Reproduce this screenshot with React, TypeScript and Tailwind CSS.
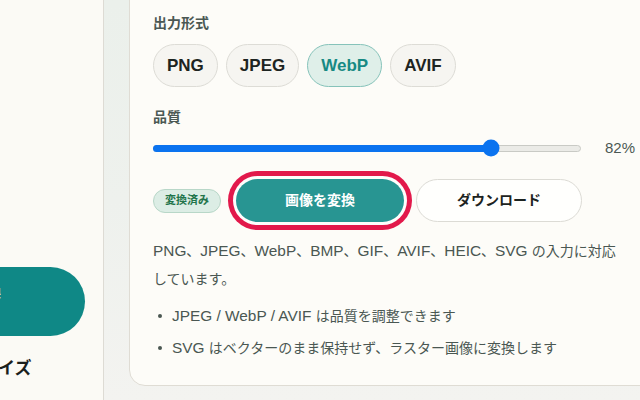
const formats = ["PNG", "JPEG", "WebP", "AVIF"];

// latin runs render a touch wider than the japanese ones in the original
function Mixed({ text }: { text: string }) {
  const parts = text.split(/([\x20-\x7E]+)/).filter((p) => p !== "");
  return (
    <>
      {parts.map((p, i) =>
        /^[\x20-\x7E]+$/.test(p) ? (
          <span key={i} className="text-[15.4px]">
            {p}
          </span>
        ) : (
          <span key={i}>{p}</span>
        )
      )}
    </>
  );
}

export default function App() {
  const active = "WebP";
  const quality = 82;

  return (
    <div
      className="w-[640px] h-[400px] overflow-hidden flex bg-[#f3f3f0]"
      style={{ fontFamily: '"Liberation Sans", "Noto Sans CJK JP", sans-serif' }}
    >
      {/* Sidebar */}
      <aside className="w-[104px] shrink-0 h-full bg-[#fbfaf5] border-r border-[#dddbd4] flex flex-col">
        <div className="mt-[267px] ml-[-116px] w-[201px] h-[69px] rounded-full bg-[#0f8886] flex items-center justify-end pr-[84px] pb-[18px] text-white text-[15px] font-bold">
          画像変換
        </div>
        <div className="mt-[21px] ml-[-36px] text-[17px] font-bold text-[#1b1f1d] leading-[24px]">
          リサイズ
        </div>
      </aside>

      {/* Main */}
      <main className="flex-1 h-full bg-gradient-to-b from-[#ebf0eb] via-[#eef1ed] to-[#f3f3f0] pl-[25px]">
        <section className="w-[531px] mt-[-20px] bg-[#fdfcf8] border border-[#dfdcd4] rounded-2xl pl-[23px] pr-[24px] pt-[32px] pb-[25px]">
          <div className="text-[14px] leading-[20px] font-bold text-[#4b5853]">出力形式</div>
          <div className="mt-[11px] flex gap-2">
            {formats.map((f) =>
              f === active ? (
                <button
                  key={f}
                  className="h-[43px] px-[13px] rounded-full border border-[#86c3ba] bg-[#dfefe9] text-[#178a84] text-[17px] font-bold"
                >
                  {f}
                </button>
              ) : (
                <button
                  key={f}
                  className="h-[43px] px-[13px] rounded-full border border-[#dddcd6] bg-[#f6f5f1] text-[#1d2421] text-[17px] font-bold"
                >
                  {f}
                </button>
              )
            )}
          </div>

          <div className="mt-[20px] text-[14px] leading-[20px] font-bold text-[#4b5853]">品質</div>
          <div className="mt-[11px] h-[20px] flex items-center">
            <div className="relative w-[428px] h-[7px] rounded-full bg-[#ebebe7] border border-[#c9cac5]">
              <div className="absolute left-[-1px] top-[-1px] w-[338px] h-[7px] rounded-full bg-[#0b73ef]" />
              <div className="absolute left-[337px] top-1/2 w-[17px] h-[17px] -translate-x-1/2 -translate-y-1/2 rounded-full bg-[#0b73ef]" />
            </div>
            <span className="ml-auto text-[15px] text-[#4b5853]">{quality}%</span>
          </div>

          <div className="mt-[21px] flex items-center">
            <span className="h-[24px] px-[11px] rounded-full border border-[#b8d7c8] bg-[#dcede5] text-[#22744b] text-[11px] font-bold flex items-center">
              変換済み
            </span>
            <button className="ml-[15px] w-[168px] h-[43px] rounded-full bg-[#289592] text-white text-[14px] font-bold ring-5 ring-[#e2194b] ring-offset-3 ring-offset-[#fefefc]">
              画像を変換
            </button>
            <button className="ml-[12px] w-[166px] h-[43px] rounded-full border border-[#dcdbd5] bg-[#fffffd] text-[#1c2320] text-[14px] font-bold">
              ダウンロード
            </button>
          </div>

          <p className="mt-[15px] pr-[8px] text-[14px] leading-[28px] text-[#4a5752]">
            <Mixed text="PNG、JPEG、WebP、BMP、GIF、AVIF、HEIC、SVG の入力に対応しています。" />
          </p>

          <ul className="mt-[11px] space-y-2 text-[14px] leading-[24px] text-[#4a5752]">
            <li className="flex items-center">
              <span className="ml-[5px] mr-[10px] w-[4px] h-[4px] rounded-full bg-[#4a5752]" />
              <span>
                <Mixed text="JPEG / WebP / AVIF は品質を調整できます" />
              </span>
            </li>
            <li className="flex items-center">
              <span className="ml-[5px] mr-[10px] w-[4px] h-[4px] rounded-full bg-[#4a5752]" />
              <span>
                <Mixed text="SVG はベクターのまま保持せず、ラスター画像に変換します" />
              </span>
            </li>
          </ul>
        </section>
      </main>
    </div>
  );
}
